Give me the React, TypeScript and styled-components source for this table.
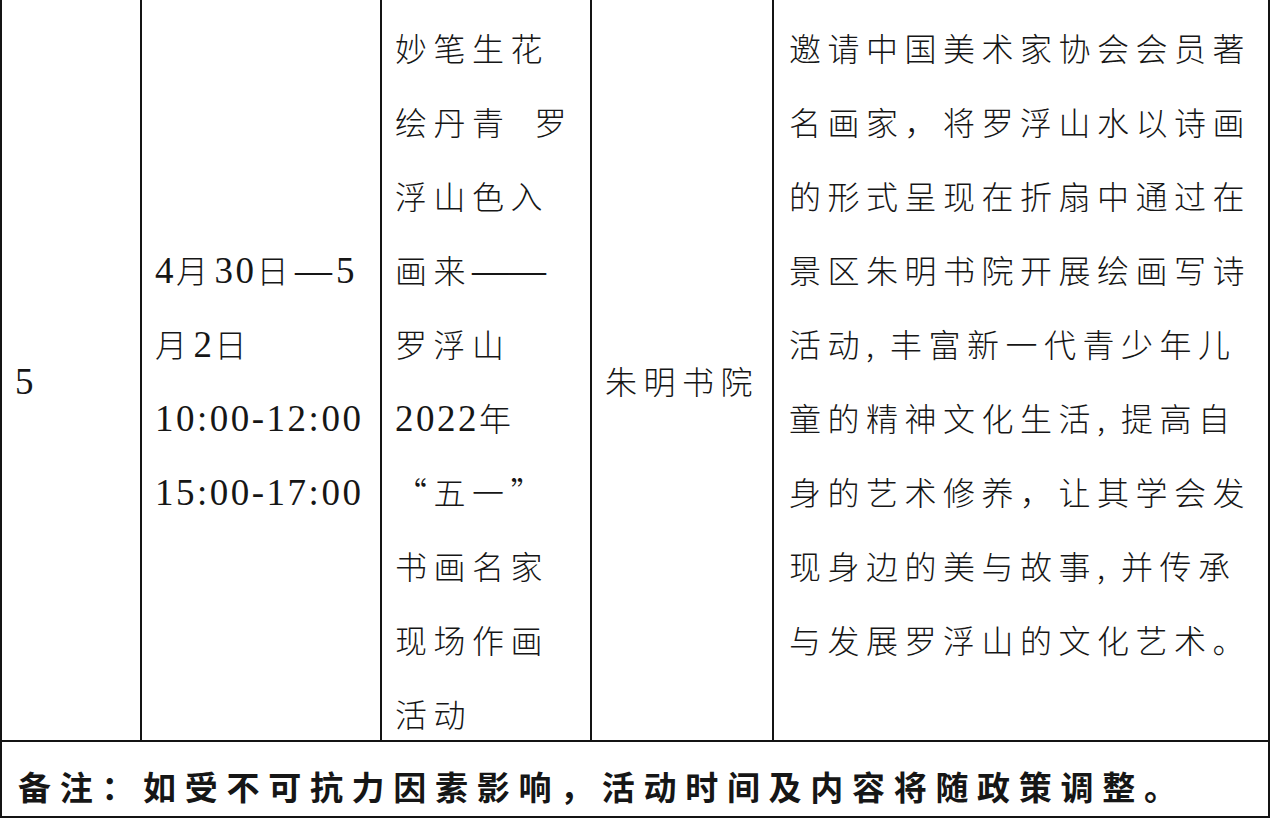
import React from "react";
import styled, { createGlobalStyle } from "styled-components";

const GlobalStyle = createGlobalStyle`
  html, body {
    margin: 0;
    padding: 0;
    background: #ffffff;
  }
  body {
    font-family: "Noto Sans CJK SC", "Noto Sans", sans-serif;
    color: #161616;
    overflow: hidden;
  }
`;

const Sheet = styled.div`
  width: 1270px;
  height: 818px;
  box-sizing: border-box;
  border-left: 2px solid #141414;
  border-right: 2px solid #141414;
  border-bottom: 2px solid #141414;
  display: flex;
  flex-direction: column;
`;

const Row = styled.div`
  display: grid;
  grid-template-columns: 140px 240px 210px 182px 1fr;
  height: 740px;
  border-bottom: 2px solid #141414;
`;

const Cell = styled.div<{ $top?: boolean; $center?: boolean; $last?: boolean }>`
  display: flex;
  flex-direction: column;
  justify-content: ${(p) => (p.$top ? "flex-start" : "center")};
  align-items: ${(p) => (p.$center ? "center" : "flex-start")};
  padding: ${(p) => (p.$top ? "10px" : "20px")} ${(p) => (p.$last ? "15px" : "13px")} 0;
  border-right: ${(p) => (p.$last ? "none" : "2px solid #141414")};
  min-height: 0;
  font-size: 32px;
  font-weight: 300;
  letter-spacing: 6.5px;
`;

const Line = styled.div`
  height: 74px;
  line-height: 74px;
  white-space: nowrap;
  flex-shrink: 0;
`;

const Num = styled.span`
  font-family: "Liberation Serif", "Times New Roman", serif;
  font-size: 37px;
  letter-spacing: 2.5px;
`;

const Dash = styled(Num)`
  letter-spacing: 0;
  margin-right: 4px;
`;

const Comma = styled.span`
  letter-spacing: 16px;
`;

const Gap = styled.span`
  display: inline-block;
  width: 24px;
`;

const Note = styled.div`
  flex: 1;
  display: flex;
  align-items: center;
  padding: 14px 0 0 16px;
  font-size: 33px;
  font-weight: 700;
  letter-spacing: 8.7px;
  white-space: nowrap;
`;

const titleLines = [
  "妙笔生花",
  <>绘丹青<Gap />罗</>,
  "浮山色入",
  <>画来<Dash>——</Dash></>,
  "罗浮山",
  <><Num>2022</Num>年</>,
  "“五一”",
  "书画名家",
  "现场作画",
  "活动",
];

const contentLines = [
  "邀请中国美术家协会会员著",
  "名画家，将罗浮山水以诗画",
  "的形式呈现在折扇中通过在",
  "景区朱明书院开展绘画写诗",
  <>活动<Comma>,</Comma>丰富新一代青少年儿</>,
  <>童的精神文化生活<Comma>,</Comma>提高自</>,
  "身的艺术修养，让其学会发",
  <>现身边的美与故事<Comma>,</Comma>并传承</>,
  "与发展罗浮山的文化艺术。",
];

const App = () => {
  return (
    <>
      <GlobalStyle />
      <Sheet>
        <Row>
          <Cell>
            <Line><Num>5</Num></Line>
          </Cell>
          <Cell>
            <Line><Num>4</Num>月<Num>30</Num>日<Dash>—</Dash><Num>5</Num></Line>
            <Line>月<Num>2</Num>日</Line>
            <Line><Num>10:00-12:00</Num></Line>
            <Line><Num>15:00-17:00</Num></Line>
          </Cell>
          <Cell>
            {titleLines.map((t, i) => (
              <Line key={i}>{t}</Line>
            ))}
          </Cell>
          <Cell $center>
            <Line>朱明书院</Line>
          </Cell>
          <Cell $top $last>
            {contentLines.map((t, i) => (
              <Line key={i}>{t}</Line>
            ))}
          </Cell>
        </Row>
        <Note>备注：如受不可抗力因素影响，活动时间及内容将随政策调整。</Note>
      </Sheet>
    </>
  );
};

export default App;
